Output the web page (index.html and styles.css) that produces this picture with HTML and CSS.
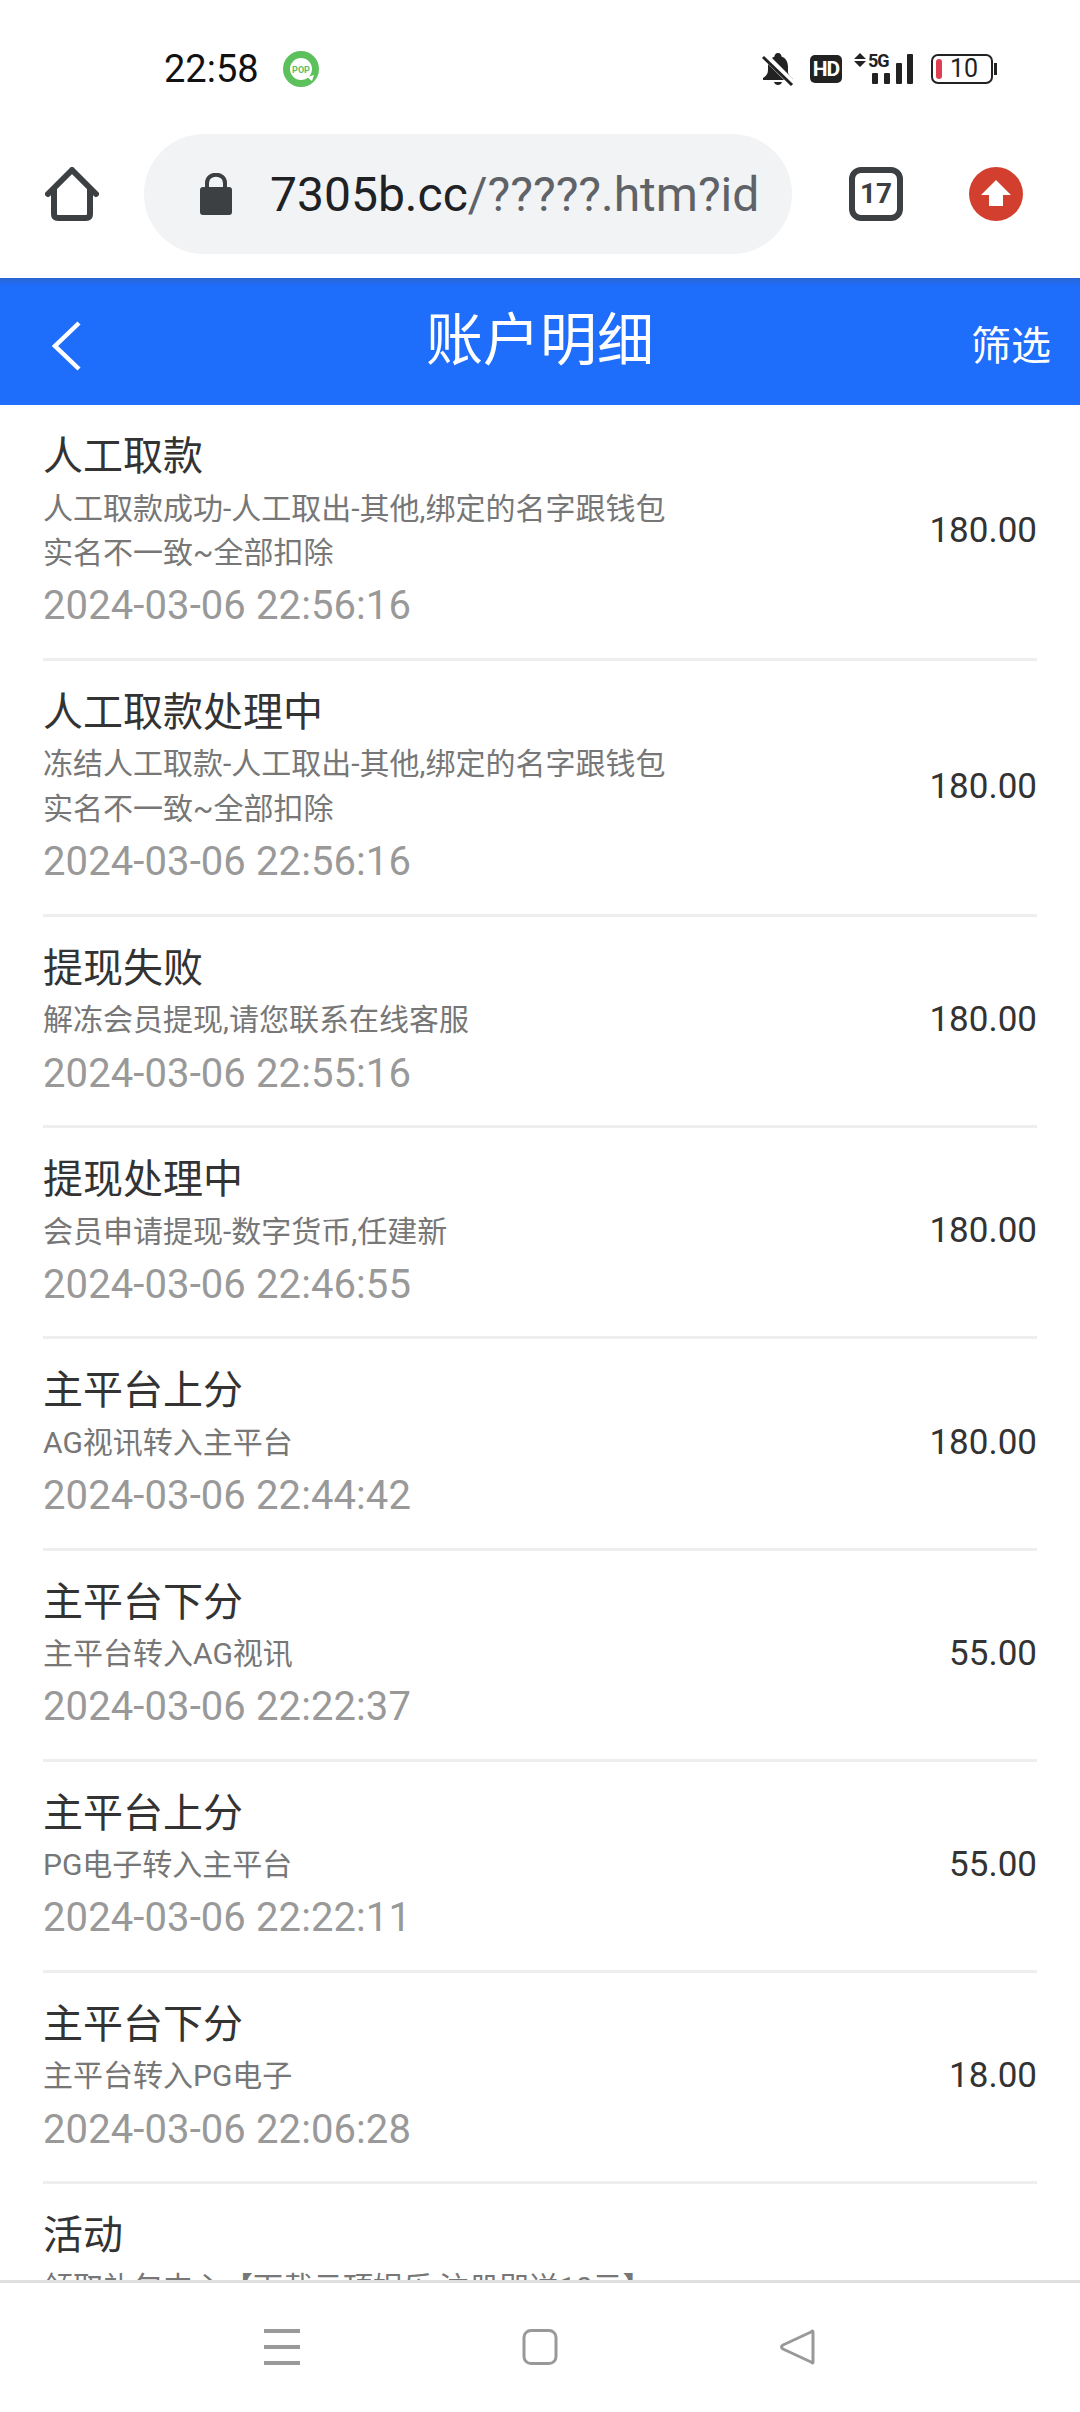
FILE: index.html
```html
<!DOCTYPE html>
<html lang="zh-CN">
<head>
    <meta charset="UTF-8">
    <meta name="viewport" content="width=device-width, initial-scale=1.0">
    <title>账户明细</title>
    <link rel="stylesheet" href="styles.css">
</head>
<body>
    <div class="screen">
        <!-- Status bar -->
        <div class="status-bar">
            <div class="status-left">
                <span class="clock">22:58</span>
                <svg class="pop-icon" width="38" height="38" viewBox="0 0 38 38">
                    <circle cx="19" cy="19" r="14.500" fill="#fff" stroke="#5cc05c" stroke-width="7"/>
                    <path d="M25 27 L32 25 L30 31 Z" fill="#fff"/>
                    <text x="19" y="22.500" text-anchor="middle" class="pop-text">POP</text>
                </svg>
            </div>
            <div class="status-right">
                <svg class="bell" width="32" height="34" viewBox="0 0 32 34">
                    <path d="M16 1 C18.500 1 19.500 3 19.500 4.500 C24 6 26 10 26 15 L26 20 C26 23 29 25 31 27 L31 28 L1 28 L1 26 C4 24 6 22 6 18 L6 14 C6 9 9 6 12.500 4.500 C12.500 3 13.500 1 16 1 Z" fill="#222"/>
                    <path d="M12 30 H20 C19 34 13 34 12 30 Z" fill="#222"/>
                    <path d="M2 3 L31 32" stroke="#fff" stroke-width="7"/>
                    <path d="M1 5 L30 33" stroke="#222" stroke-width="3"/>
                </svg>
                <span class="hd-badge">HD</span>
                <svg class="signal" width="59" height="42" viewBox="0 0 59 42">
                    <path d="M6 5 L12 11 H0 Z M6 19 L12 13 H0 Z" fill="#222"/>
                    <text x="14" y="19" class="signal-text">5G</text>
                    <rect x="18" y="25" width="6" height="11" rx="1" fill="#222"/>
                    <rect x="30" y="25" width="6" height="11" rx="1" fill="#222"/>
                    <rect x="42" y="15" width="6" height="21" rx="1" fill="#222"/>
                    <rect x="53" y="6" width="6" height="30" rx="1" fill="#222"/>
                </svg>
                <div class="battery">
                    <div class="battery-body">
                        <span class="battery-level"></span>
                        <span class="battery-text">10</span>
                    </div>
                    <span class="battery-cap"></span>
                </div>
            </div>
        </div>

        <!-- Browser toolbar -->
        <div class="toolbar">
            <svg width="54" height="54" viewBox="0 0 54 54">
                <path d="M3 27 L27 3 L51 27" fill="none" stroke="#3c4043" stroke-width="6" stroke-linecap="round" stroke-linejoin="round"/>
                <path d="M9 21 V47 Q9 51 13 51 H41 Q45 51 45 47 V21" fill="none" stroke="#3c4043" stroke-width="6"/>
            </svg>
            <div class="url-bar">
                <svg width="32" height="42" viewBox="0 0 32 42">
                    <path d="M7 16 V10 C7 -1 25 -1 25 10 V16" fill="none" stroke="#3c4043" stroke-width="4"/>
                    <rect x="0" y="14" width="32" height="28" rx="3" fill="#3c4043"/>
                </svg>
                <span class="url"><span class="url-host">7305b.cc</span>/?????.htm?id</span>
            </div>
            <div class="tab-count">17</div>
            <svg class="upload" width="54" height="54" viewBox="0 0 54 54">
                <circle cx="27" cy="27" r="27" fill="#d33f2f"/>
                <path d="M27 13 L42 28 H34 V39 H20 V28 H12 Z" fill="#fff"/>
            </svg>
        </div>

        <!-- Page header -->
        <header class="page-header">
            <svg class="back" width="30" height="50" viewBox="0 0 30 50">
                <path d="M28 2 L4 25 L28 48" fill="none" stroke="#fff" stroke-width="4.500"/>
            </svg>
            <h1>账户明细</h1>
            <span class="filter">筛选</span>
        </header>

        <!-- Account records -->
        <div class="records" id="records">
            <div class="record">
                <div class="record-info">
                    <div class="record-title">人工取款</div>
                    <div class="record-desc">人工取款成功-人工取出-其他,绑定的名字跟钱包<br>实名不一致~全部扣除</div>
                    <div class="record-time">2024-03-06 22:56:16</div>
                </div>
                <div class="record-amount">180.00</div>
            </div>
            <div class="record">
                <div class="record-info">
                    <div class="record-title">人工取款处理中</div>
                    <div class="record-desc">冻结人工取款-人工取出-其他,绑定的名字跟钱包<br>实名不一致~全部扣除</div>
                    <div class="record-time">2024-03-06 22:56:16</div>
                </div>
                <div class="record-amount">180.00</div>
            </div>
            <div class="record">
                <div class="record-info">
                    <div class="record-title">提现失败</div>
                    <div class="record-desc">解冻会员提现,请您联系在线客服</div>
                    <div class="record-time">2024-03-06 22:55:16</div>
                </div>
                <div class="record-amount">180.00</div>
            </div>
            <div class="record">
                <div class="record-info">
                    <div class="record-title">提现处理中</div>
                    <div class="record-desc">会员申请提现-数字货币,任建新</div>
                    <div class="record-time">2024-03-06 22:46:55</div>
                </div>
                <div class="record-amount">180.00</div>
            </div>
            <div class="record">
                <div class="record-info">
                    <div class="record-title">主平台上分</div>
                    <div class="record-desc">AG视讯转入主平台</div>
                    <div class="record-time">2024-03-06 22:44:42</div>
                </div>
                <div class="record-amount">180.00</div>
            </div>
            <div class="record">
                <div class="record-info">
                    <div class="record-title">主平台下分</div>
                    <div class="record-desc">主平台转入AG视讯</div>
                    <div class="record-time">2024-03-06 22:22:37</div>
                </div>
                <div class="record-amount">55.00</div>
            </div>
            <div class="record">
                <div class="record-info">
                    <div class="record-title">主平台上分</div>
                    <div class="record-desc">PG电子转入主平台</div>
                    <div class="record-time">2024-03-06 22:22:11</div>
                </div>
                <div class="record-amount">55.00</div>
            </div>
            <div class="record">
                <div class="record-info">
                    <div class="record-title">主平台下分</div>
                    <div class="record-desc">主平台转入PG电子</div>
                    <div class="record-time">2024-03-06 22:06:28</div>
                </div>
                <div class="record-amount">18.00</div>
            </div>
            <div class="record">
                <div class="record-info">
                    <div class="record-title">活动</div>
                    <div class="record-desc">领取礼包中心【下载云顶娱乐,注册即送10元】</div>
                </div>
            </div>
        </div>

        <!-- System navigation -->
        <nav class="system-nav">
            <svg width="36" height="36" viewBox="0 0 36 36">
                <path d="M0 2 H36 M0 18 H36 M0 34 H36" stroke="#999" stroke-width="4"/>
            </svg>
            <svg width="36" height="36" viewBox="0 0 36 36">
                <rect x="2" y="1.500" width="32" height="33" rx="7" fill="none" stroke="#999" stroke-width="3"/>
            </svg>
            <svg width="36" height="36" viewBox="0 0 36 36">
                <path d="M33 3 Q33 1 31 3 L3 16 Q0 18 3 20 L31 33 Q33 35 33 33 Z" fill="none" stroke="#999" stroke-width="3" stroke-linejoin="round"/>
            </svg>
        </nav>
    </div>
</body>
</html>
```

FILE: styles.css
```css
* {
    box-sizing: border-box;
    margin: 0;
    padding: 0;
}

body {
    font-family: Roboto, "Noto Sans CJK SC", sans-serif;
    background-color: #ffffff;
}

.screen {
    height: 2412px;
    display: flex;
    flex-direction: column;
    overflow: hidden;
}

.status-bar {
    height: 134px;
    flex-shrink: 0;
    display: flex;
    justify-content: space-between;
    align-items: center;
    padding: 3px 83px 0 164px;
}

.status-left,
.status-right {
    display: flex;
    align-items: center;
}

.clock {
    font-size: 38px;
    color: #111111;
}

.pop-icon {
    margin-left: 23px;
}

.pop-text {
    font-size: 9px;
    font-weight: 700;
    fill: #5cc05c;
}

.hd-badge {
    width: 32px;
    height: 28px;
    margin-left: 16px;
    background-color: #222222;
    border-radius: 5px;
    color: #ffffff;
    font-size: 21px;
    font-weight: 700;
    line-height: 28px;
    text-align: center;
    letter-spacing: -1px;
}

.signal {
    margin-left: 12px;
}

.signal-text {
    font-size: 18px;
    font-weight: 700;
    letter-spacing: -1px;
    fill: #222222;
}

.battery {
    display: flex;
    align-items: center;
    gap: 1px;
    margin-left: 18px;
}

.battery-body {
    width: 62px;
    height: 30px;
    border: 2px solid #222222;
    border-radius: 7px;
    display: flex;
    align-items: center;
    padding-left: 3px;
}

.battery-level {
    width: 6px;
    height: 20px;
    border-radius: 3px;
    background-color: #df3d52;
}

.battery-text {
    margin-left: 8px;
    font-size: 25px;
    line-height: 1;
    color: #222222;
}

.battery-cap {
    width: 3px;
    height: 12px;
    background-color: #222222;
}

.toolbar {
    height: 144px;
    flex-shrink: 0;
    display: flex;
    align-items: center;
    padding: 0 0 24px 45px;
}

.url-bar {
    width: 648px;
    height: 120px;
    margin-left: 45px;
    border-radius: 60px;
    background-color: #f1f3f4;
    display: flex;
    align-items: center;
    padding-left: 56px;
    overflow: hidden;
}

.url {
    margin-left: 38px;
    font-size: 48px;
    white-space: nowrap;
    color: #5f6368;
}

.url-host {
    color: #202124;
}

.tab-count {
    width: 54px;
    height: 54px;
    margin-left: 57px;
    border: 6px solid #3c4043;
    border-radius: 12px;
    font-size: 28px;
    font-weight: 700;
    line-height: 42px;
    text-align: center;
    color: #3c4043;
}

.upload {
    margin-left: 66px;
}

.page-header {
    height: 127px;
    flex-shrink: 0;
    background: linear-gradient(#2a66d2, #1f6dfb 8px);
    display: grid;
    grid-template-columns: 1fr auto 1fr;
    align-items: center;
    padding: 0 29px;
    color: #ffffff;
}

.back {
    margin: 9px 0 0 22px;
}

.page-header h1 {
    font-size: 57px;
    font-weight: 400;
    margin-bottom: 14px;
}

.filter {
    justify-self: end;
    font-size: 40px;
    margin-top: 2px;
}

.records {
    flex: 1;
    overflow: hidden;
}

.record {
    margin: 0 43px;
    padding: 24px 0 23.6px;
    border-bottom: 3px solid #eeeeee;
    display: flex;
    align-items: center;
    justify-content: space-between;
}

.record-title {
    font-size: 40px;
    line-height: 56px;
    color: #333333;
}

.record-desc {
    margin-top: 1.5px;
    font-size: 30px;
    line-height: 44.8px;
    color: #777777;
}

.record-time {
    margin-top: 2.3px;
    font-size: 40px;
    line-height: 56px;
    letter-spacing: 0.1px;
    color: #999999;
}

.record-amount {
    margin-bottom: 3px;
    font-size: 35px;
    color: #333333;
}

.system-nav {
    height: 132px;
    flex-shrink: 0;
    border-top: 3px solid #e0e0e0;
    padding-bottom: 2px;
    display: grid;
    grid-template-columns: repeat(3, 36px);
    justify-content: center;
    column-gap: 222px;
    align-items: center;
}
```
